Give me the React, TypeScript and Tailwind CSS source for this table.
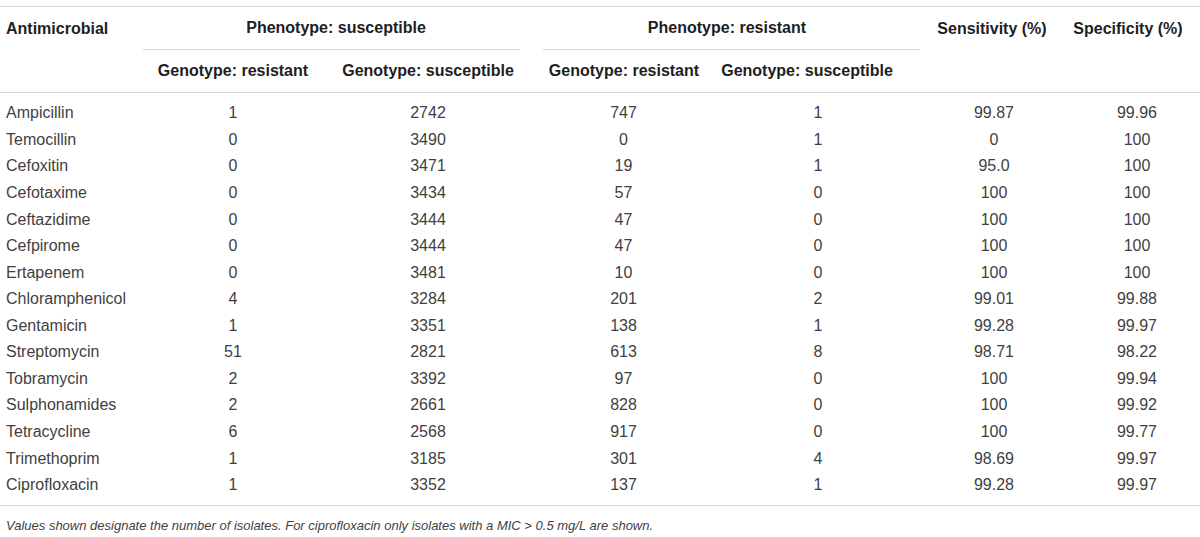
import React from "react";

const rows: string[][] = [
  ["Ampicillin", "1", "2742", "747", "1", "99.87", "99.96"],
  ["Temocillin", "0", "3490", "0", "1", "0", "100"],
  ["Cefoxitin", "0", "3471", "19", "1", "95.0", "100"],
  ["Cefotaxime", "0", "3434", "57", "0", "100", "100"],
  ["Ceftazidime", "0", "3444", "47", "0", "100", "100"],
  ["Cefpirome", "0", "3444", "47", "0", "100", "100"],
  ["Ertapenem", "0", "3481", "10", "0", "100", "100"],
  ["Chloramphenicol", "4", "3284", "201", "2", "99.01", "99.88"],
  ["Gentamicin", "1", "3351", "138", "1", "99.28", "99.97"],
  ["Streptomycin", "51", "2821", "613", "8", "98.71", "98.22"],
  ["Tobramycin", "2", "3392", "97", "0", "100", "99.94"],
  ["Sulphonamides", "2", "2661", "828", "0", "100", "99.92"],
  ["Tetracycline", "6", "2568", "917", "0", "100", "99.77"],
  ["Trimethoprim", "1", "3185", "301", "4", "98.69", "99.97"],
  ["Ciprofloxacin", "1", "3352", "137", "1", "99.28", "99.97"],
];

export default function App() {
  return (
    <div
      className="w-[1200px] h-[537px] bg-white overflow-hidden pt-[6px] text-[16px] text-[#3f3f3f]"
      style={{ fontFamily: '"Liberation Sans", Arial, sans-serif' }}
    >
      <div className="border-t border-[#d6d6d6]">
        {/* header row 1 */}
        <div className="flex h-[43px] font-bold text-[#1e1e1e] whitespace-nowrap">
          <div className="w-[143px] pl-[6px] flex items-center">Antimicrobial</div>
          <div className="w-[377px] pl-[9px] flex items-center justify-center border-b border-[#d6d6d6]">
            Phenotype: susceptible
          </div>
          <div className="w-[23px]" />
          <div className="w-[377px] pr-[9px] flex items-center justify-center border-b border-[#d6d6d6]">
            Phenotype: resistant
          </div>
          <div className="w-[144px] flex items-center justify-center">Sensitivity (%)</div>
          <div className="w-[128px] flex items-center justify-center">Specificity (%)</div>
        </div>
        {/* header row 2 */}
        <div className="flex h-[43px] font-bold text-[#1e1e1e] whitespace-nowrap border-b border-[#d6d6d6]">
          <div className="w-[140px]" />
          <div className="w-[186px] flex items-center justify-center">Genotype: resistant</div>
          <div className="w-[204px] flex items-center justify-center">Genotype: susceptible</div>
          <div className="w-[188px] flex items-center justify-center">Genotype: resistant</div>
          <div className="w-[178px] flex items-center justify-center">Genotype: susceptible</div>
        </div>
        {/* body */}
        <div className="pt-[7px] pb-[7px] border-b border-[#d6d6d6]">
          {rows.map((r) => (
            <div key={r[0]} className="flex h-[26.57px] items-center whitespace-nowrap">
              <div className="w-[140px] pl-[6px]">{r[0]}</div>
              <div className="w-[186px] text-center">{r[1]}</div>
              <div className="w-[204px] text-center">{r[2]}</div>
              <div className="w-[187px] text-center">{r[3]}</div>
              <div className="w-[202px] text-center">{r[4]}</div>
              <div className="w-[150px] text-center">{r[5]}</div>
              <div className="w-[131px] pl-[5px] text-center">{r[6]}</div>
            </div>
          ))}
        </div>
        <div className="pt-[10px] pl-[6px] text-[13px] leading-[20px] italic text-[#3f3f3f]">
          Values shown designate the number of isolates. For ciprofloxacin only isolates with a MIC &gt; 0.5 mg/L are shown.
        </div>
      </div>
    </div>
  );
}
